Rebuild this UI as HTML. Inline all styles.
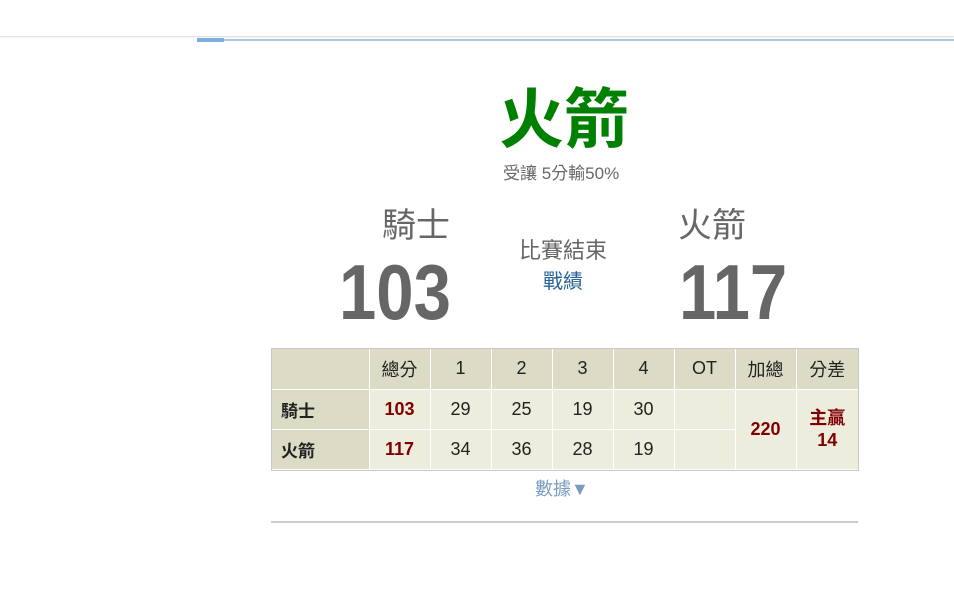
<!DOCTYPE html>
<html><head><meta charset="utf-8"><style>
*{margin:0;padding:0;box-sizing:border-box}
body{width:954px;height:589px;background:#fff;position:relative;overflow:hidden;font-family:"Liberation Sans","Noto Sans CJK TC",sans-serif}
.top{position:absolute;left:0;top:0;width:954px;height:37px;background:#fff;border-bottom:1px solid #e2e2e2;box-shadow:0 1px 2px rgba(0,0,0,.06)}
.line{position:absolute;left:197px;top:39px;width:757px;height:2px;background:#a8c8e8}
.seg{position:absolute;left:197px;top:38px;width:27px;height:4px;background:#7eaee0}
.abs{position:absolute;white-space:nowrap}
.wrap{position:absolute;left:271px;top:348px;width:588px;height:123px;border:1px solid #c8c8c8}
table{width:586px;border-collapse:collapse;font-size:18px;table-layout:fixed}
td{border:1px solid #fff;height:40px;text-align:center;color:#222;background:#ededdd}
tr:first-child td{border-top:none}
tr:last-child td{border-bottom:none}
td:first-child{border-left:none}
td:last-child{border-right:none}
tr.h td{background:#dcdcc6}
td.f{background:#dcdcc6;text-align:left;padding-left:9px;font-weight:bold;font-size:17px}
.r{color:#800000;font-weight:bold}
.big{position:absolute;white-space:nowrap;font-size:78px;font-weight:bold;color:#666;line-height:88px;transform:scaleX(0.86);transform-origin:left top}
</style></head><body>
<div class="top"></div>
<div class="line"></div><div class="seg"></div>
<div class="abs" style="left:499px;top:80px;font-size:65px;font-weight:bold;color:#008000;line-height:80px">火箭</div>
<div class="abs" style="left:503px;top:162px;font-size:17px;color:#666;line-height:24px">受讓 5分輸50%</div>
<div class="abs" style="left:382px;top:204px;font-size:34px;color:#666;line-height:44px">騎士</div>
<div class="abs" style="left:678px;top:204px;font-size:34px;color:#666;line-height:44px">火箭</div>
<div class="abs" style="left:519px;top:236px;font-size:22px;color:#666;line-height:30px">比賽結束</div>
<div class="abs" style="left:543px;top:268px;font-size:20px;color:#2a6496;line-height:28px">戰績</div>
<div class="big" style="left:339px;top:248px">103</div>
<div class="big" style="left:679px;top:248px">117</div>
<div class="wrap"><table>
<colgroup><col style="width:97px"><col style="width:61px"><col style="width:61px"><col style="width:61px"><col style="width:61px"><col style="width:61px"><col style="width:61px"><col style="width:61px"><col style="width:62px"></colgroup>
<tr class="h"><td class="f"></td><td>總分</td><td>1</td><td>2</td><td>3</td><td>4</td><td>OT</td><td>加總</td><td>分差</td></tr>
<tr><td class="f">騎士</td><td class="r">103</td><td>29</td><td>25</td><td>19</td><td>30</td><td></td><td rowspan="2" class="r">220</td><td rowspan="2" class="r" style="line-height:22px">主贏<br>14</td></tr>
<tr><td class="f">火箭</td><td class="r">117</td><td>34</td><td>36</td><td>28</td><td>19</td><td></td></tr>
</table></div>
<div class="abs" style="left:535px;top:477px;font-size:18px;color:#7a9cc0;line-height:24px">數據▼</div>
<div class="abs" style="left:271px;top:521px;width:587px;height:2px;background:#ccc"></div>
</body></html>
